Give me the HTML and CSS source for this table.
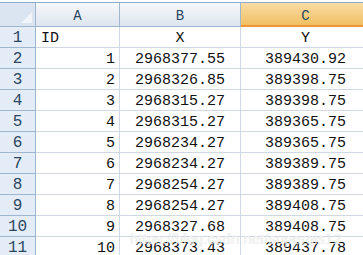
FILE: index.html
```html
<!DOCTYPE html>
<html lang="zh-CN">
<head>
  <meta charset="UTF-8">
  <meta name="viewport" content="width=device-width, initial-scale=1.0">
  <title>Sheet1</title>
  <link rel="stylesheet" href="styles.css">
</head>
<body>
  <div class="topbar"></div>
  <div class="sheet">
    <div class="hd corner"><span class="tri"></span></div>
    <div class="hd col">A</div>
    <div class="hd col">B</div>
    <div class="hd col sel">C</div>

    <div class="hd row">1</div>
    <div class="cell left">ID</div>
    <div class="cell mid">X</div>
    <div class="cell mid">Y</div>

    <div class="hd row">2</div>
    <div class="cell num">1</div>
    <div class="cell mid">2968377.55</div>
    <div class="cell mid">389430.92</div>

    <div class="hd row">3</div>
    <div class="cell num">2</div>
    <div class="cell mid">2968326.85</div>
    <div class="cell mid">389398.75</div>

    <div class="hd row">4</div>
    <div class="cell num">3</div>
    <div class="cell mid">2968315.27</div>
    <div class="cell mid">389398.75</div>

    <div class="hd row">5</div>
    <div class="cell num">4</div>
    <div class="cell mid">2968315.27</div>
    <div class="cell mid">389365.75</div>

    <div class="hd row">6</div>
    <div class="cell num">5</div>
    <div class="cell mid">2968234.27</div>
    <div class="cell mid">389365.75</div>

    <div class="hd row">7</div>
    <div class="cell num">6</div>
    <div class="cell mid">2968234.27</div>
    <div class="cell mid">389389.75</div>

    <div class="hd row">8</div>
    <div class="cell num">7</div>
    <div class="cell mid">2968254.27</div>
    <div class="cell mid">389389.75</div>

    <div class="hd row">9</div>
    <div class="cell num">8</div>
    <div class="cell mid">2968254.27</div>
    <div class="cell mid">389408.75</div>

    <div class="hd row">10</div>
    <div class="cell num">9</div>
    <div class="cell mid">2968327.68</div>
    <div class="cell mid">389408.75</div>

    <div class="hd row">11</div>
    <div class="cell num">10</div>
    <div class="cell mid">2968373.43</div>
    <div class="cell mid">389437.78</div>
  </div>
  <div class="watermark">https://blog.csdn.net/supergis12</div>
</body>
</html>
```

FILE: styles.css
```css
body {
  margin: 0;
  width: 363px;
  height: 255px;
  overflow: hidden;
  background: #fff;
  position: relative;
  font-family: "Liberation Mono", "DejaVu Sans Mono", monospace;
}
.topbar {
  height: 2px;
  border-bottom: 1px solid #8faccc;
  background: #fff;
}
.sheet {
  display: grid;
  grid-template-columns: 36px 84px 121px 130px;
  grid-template-rows: 24px repeat(11, 21px);
}
.hd, .cell {
  box-sizing: border-box;
  display: flex;
  align-items: flex-end;
  border-right: 1px solid #d0d7e5;
  border-bottom: 1px solid #d0d7e5;
  white-space: nowrap;
  line-height: 17px;
}
.hd {
  color: #2b4762;
  justify-content: center;
  border-color: #9eb6ce;
}
.col {
  font-size: 14px;
  padding-bottom: 1px;
  background: linear-gradient(#f6f8fb, #dee5ef);
}
.col.sel {
  background: linear-gradient(#f9dca5, #f1c062);
  border-bottom: 2px solid #f29436;
  border-right-color: #f2b46a;
  padding-bottom: 0;
}
.corner {
  background: #dbe5f1;
  position: relative;
}
.tri {
  position: absolute;
  right: 3px;
  bottom: 3px;
  width: 11px;
  height: 11px;
  background: #f2f5f9;
  clip-path: polygon(100% 0, 100% 100%, 0 100%);
}
.row {
  font-size: 16px;
  background: #e4ecf7;
}
.cell {
  font-size: 15px;
  color: #111;
}
.left {
  padding-left: 5px;
}
.num {
  justify-content: flex-end;
  padding-right: 4px;
}
.mid {
  justify-content: center;
}
.watermark {
  position: absolute;
  left: 130px;
  top: 230px;
  font-family: "Liberation Sans", Arial, sans-serif;
  font-size: 15px;
  color: rgba(255, 255, 255, 0.8);
  text-shadow: 0 0 1px rgba(0, 0, 0, 0.2);
}
```
